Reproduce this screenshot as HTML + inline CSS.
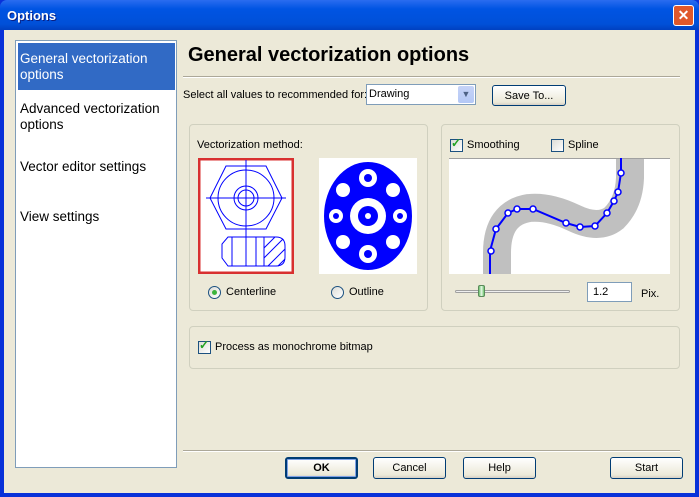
<!DOCTYPE html><html><head><style>
*{box-sizing:border-box;margin:0;padding:0}
body{width:699px;height:497px;overflow:hidden;background:#0831D9;font-family:"Liberation Sans",sans-serif;font-size:11px;position:relative}
.a{position:absolute;white-space:nowrap}
.title{left:0;top:0;width:699px;height:30px;background:linear-gradient(#2a6cf0,#0054e3 30%,#0050d8 80%,#0040c0);border-radius:7px 7px 0 0}
.client{left:4px;top:30px;width:691px;height:463px;background:#ECE9D8}
.btn{border:1px solid #003c74;border-radius:3px;background:linear-gradient(#fff,#ece9d8 85%,#d6d0c5);text-align:center;line-height:20px;font-size:11px;color:#000}
.grp{border:1px solid #d0d0bf;border-radius:4px}
.cb{width:13px;height:13px;border:1px solid #1c5180;background:linear-gradient(135deg,#dcdcd6,#fff)}
.rd{width:13px;height:13px;border:1px solid #1c5180;border-radius:50%;background:linear-gradient(135deg,#dcdcd6,#fff)}
</style></head><body>
<div class="a title"></div>
<div class="a" style="left:7px;top:8px;color:#fff;font-weight:bold;font-size:13px;text-shadow:1px 1px #0a1f80">Options</div>
<div class="a" style="left:673px;top:5px;width:21px;height:21px;border:1px solid #fff;border-radius:3px;background:#e0582b;color:#fff;font-weight:bold;font-size:14px;text-align:center;line-height:19px">✕</div>
<div class="a client"></div>
<div class="a" style="left:15px;top:40px;width:162px;height:428px;background:#fff;border:1px solid #7F9DB9"></div>
<div class="a" style="left:18px;top:43px;width:157px;height:47px;background:#316AC5"></div>
<div class="a" style="left:20px;top:51px;color:#fff;font-size:13.5px;line-height:16px">General vectorization<br>options</div>
<div class="a" style="left:20px;top:101px;font-size:13.5px;line-height:16px">Advanced vectorization<br>options</div>
<div class="a" style="left:20px;top:159px;font-size:13.5px">Vector editor settings</div>
<div class="a" style="left:20px;top:209px;font-size:13.5px">View settings</div>
<div class="a" style="left:188px;top:44px;font-size:20px;font-weight:bold">General vectorization options</div>
<div class="a" style="left:183px;top:76px;width:497px;height:2px;border-top:1px solid #aca899;border-bottom:1px solid #fff"></div>
<div class="a" style="left:183px;top:89px">Select all values to recommended for:</div>
<div class="a" style="left:366px;top:84px;width:110px;height:21px;background:#fff;border:1px solid #7F9DB9;padding:3px 2px">Drawing</div>
<div class="a" style="left:458px;top:86px;width:16px;height:17px;background:linear-gradient(#c6d3f7,#b4c8f6);border-radius:2px;color:#4d6185;text-align:center;font-size:9px;line-height:17px">▼</div>
<div class="a btn" style="left:492px;top:85px;width:74px;height:21px">Save To...</div>
<div class="a grp" style="left:189px;top:124px;width:239px;height:187px"></div>
<div class="a grp" style="left:441px;top:124px;width:239px;height:187px"></div>
<div class="a grp" style="left:189px;top:326px;width:491px;height:43px"></div>
<div class="a" style="left:197px;top:139px">Vectorization method:</div>
<svg class="a" style="left:198px;top:158px" width="96" height="116" viewBox="0 0 96 116">
<rect x="1" y="1" width="94" height="114" fill="#fff" stroke="#d83030" stroke-width="3"/>
<g fill="none" stroke="#0000ff" stroke-width="1">
<polygon points="28,8 68,8 84,40 68,71 28,71 12,40"/><circle cx="48" cy="40" r="28"/><circle cx="48" cy="40" r="12"/><circle cx="48" cy="40" r="8"/>
<line x1="48" y1="2" x2="48" y2="108"/><line x1="8" y1="40" x2="88" y2="40"/>
<path d="M30 79H78Q87 79 87 88V99Q87 108 78 108H30L24 100V86Z"/><line x1="34" y1="79" x2="34" y2="108"/><line x1="58" y1="79" x2="58" y2="108"/><line x1="66" y1="79" x2="66" y2="108"/>
<path d="M66 90L77 79M66 100L85 81M70 108L87 91M80 108L87 101"/></g></svg>
<svg class="a" style="left:319px;top:158px" width="98" height="116" viewBox="0 0 98 116">
<rect width="98" height="116" fill="#fff"/>
<ellipse cx="49" cy="58" rx="44" ry="54" fill="#0000ff"/>
<g fill="#fff"><circle cx="49" cy="58" r="18"/><circle cx="49" cy="20" r="9"/><circle cx="49" cy="96" r="9"/><circle cx="17" cy="58" r="7"/><circle cx="81" cy="58" r="7"/><circle cx="24" cy="32" r="7"/><circle cx="74" cy="32" r="7"/><circle cx="24" cy="84" r="7"/><circle cx="74" cy="84" r="7"/></g>
<g fill="#0000ff"><circle cx="49" cy="58" r="10"/><circle cx="49" cy="20" r="4"/><circle cx="49" cy="96" r="4"/><circle cx="17" cy="58" r="3"/><circle cx="81" cy="58" r="3"/></g>
<circle cx="49" cy="58" r="3" fill="#fff"/></svg>
<div class="a rd" style="left:208px;top:286px"></div><div class="a" style="left:212px;top:290px;width:5px;height:5px;border-radius:50%;background:#3cb43c"></div>
<div class="a" style="left:226px;top:286px">Centerline</div>
<div class="a rd" style="left:331px;top:286px"></div>
<div class="a" style="left:349px;top:286px">Outline</div>
<div class="a cb" style="left:450px;top:139px"></div><div class="a" style="left:451px;top:136px;color:#21a121;font-size:12px;font-weight:bold">✓</div>
<div class="a" style="left:467px;top:139px">Smoothing</div>
<div class="a cb" style="left:551px;top:139px"></div>
<div class="a" style="left:568px;top:139px">Spline</div>
<svg class="a" style="left:449px;top:158px" width="221" height="116" viewBox="0 0 221 116">
<rect width="221" height="116" fill="#fff"/>
<path d="M48 116V95Q48 55 80 50Q100 48 125 60Q150 72 165 60Q180 45 181 20V0" fill="none" stroke="#c0c0c0" stroke-width="28"/>
<line x1="0" y1="0.5" x2="221" y2="0.5" stroke="#a0a0a0"/>
<path d="M41 116V93L47 71L59 55L68 51L84 51L117 65L131 69L146 68L158 55L165 43L169 34L172 15L172 0" fill="none" stroke="#0000ff" stroke-width="2"/>
<g fill="#fff" stroke="#0000ff" stroke-width="1.5"><circle cx="42" cy="93" r="3"/><circle cx="47" cy="71" r="3"/><circle cx="59" cy="55" r="3"/><circle cx="68" cy="51" r="3"/><circle cx="84" cy="51" r="3"/><circle cx="117" cy="65" r="3"/><circle cx="131" cy="69" r="3"/><circle cx="146" cy="68" r="3"/><circle cx="158" cy="55" r="3"/><circle cx="165" cy="43" r="3"/><circle cx="169" cy="34" r="3"/><circle cx="172" cy="15" r="3"/></g></svg>
<div class="a" style="left:455px;top:290px;width:115px;height:3px;border:1px solid #a0a0a0;border-radius:2px;background:#f0f0f0"></div>
<div class="a" style="left:478px;top:285px;width:7px;height:12px;border:1px solid #5a8a5a;border-radius:2px;background:linear-gradient(90deg,#6cc46c,#e8f8e8,#6cc46c)"></div>
<div class="a" style="left:587px;top:282px;width:45px;height:20px;background:#fff;border:1px solid #7F9DB9;padding:3px 5px">1.2</div>
<div class="a" style="left:641px;top:288px">Pix.</div>
<div class="a cb" style="left:198px;top:341px"></div><div class="a" style="left:199px;top:338px;color:#21a121;font-size:12px;font-weight:bold">✓</div>
<div class="a" style="left:215px;top:341px">Process as monochrome bitmap</div>
<div class="a" style="left:183px;top:450px;width:497px;height:2px;border-top:1px solid #aca899;border-bottom:1px solid #fff"></div>
<div class="a btn" style="left:285px;top:457px;width:73px;height:22px;font-weight:bold;border-width:2px;border-color:#003c74;box-shadow:inset 0 0 0 1px #7fa2e6;line-height:18px">OK</div>
<div class="a btn" style="left:373px;top:457px;width:73px;height:22px">Cancel</div>
<div class="a btn" style="left:463px;top:457px;width:73px;height:22px">Help</div>
<div class="a btn" style="left:610px;top:457px;width:73px;height:22px">Start</div>
</body></html>
